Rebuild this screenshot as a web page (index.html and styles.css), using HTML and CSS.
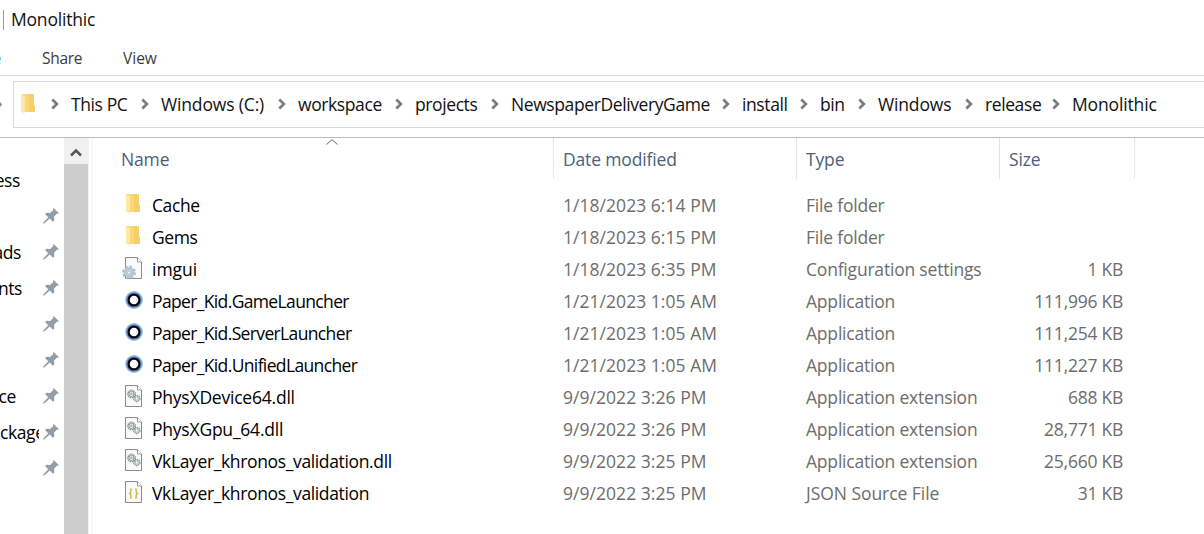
FILE: index.html
```html
<!DOCTYPE html>
<html lang="en">
<head>
<meta charset="utf-8">
<title>Monolithic</title>
<link rel="stylesheet" href="styles.css">
</head>
<body>
<svg class="defs" aria-hidden="true">
  <symbol id="folder" viewBox="0 0 16 22"><path d="M1 1h13v11l1 1v6H1z" fill="#f8d878"/><path d="M9 1h5v11l1 1v6H9z" fill="#f3cd63" opacity=".7"/><path d="M1 1l4 2.500v13l-.5.500v4L1 18z" fill="#ffe9a6"/></symbol>
  <symbol id="page" viewBox="0 0 18 23"><path d="M.5 .5h12l4 4.500v16.500H.5z" fill="#f9f9f9" stroke="#8c8c8c"/><path d="M12.500 .5v4.500h4" fill="#fff" stroke="#999"/></symbol>
  <symbol id="cogs" viewBox="0 0 18 23"><use href="#page" width="18" height="23"/><g fill="none" stroke="#7b8b95"><circle cx="6.500" cy="9" r="3.700" stroke-width="1.500" stroke-dasharray="1.300 .8"/><circle cx="6.500" cy="9" r="2.500" stroke-width=".9"/><circle cx="6.500" cy="9" r=".8" stroke-width=".8"/><circle cx="11.800" cy="13.500" r="3" stroke-width="1.500" stroke-dasharray="1.200 .8"/><circle cx="11.800" cy="13.500" r="1.700" stroke-width=".7"/></g></symbol>
  <symbol id="json" viewBox="0 0 18 23"><use href="#page" width="18" height="23"/><path d="M7 8H5.800v3.500l-1.300 1 1.300 1V17H7M10 8h1.200v3.500l1.300 1-1.300 1V17H10" fill="none" stroke="#bdb82c" stroke-width="1.200"/></symbol>
  <symbol id="config" viewBox="0 0 21 24"><svg x="3" y="0" width="18" height="23"><use href="#page" width="18" height="23"/></svg><circle cx="7" cy="15.500" r="5.900" fill="none" stroke="#a9bdcc" stroke-width="2" stroke-dasharray="2.600 2"/><circle cx="7" cy="15.500" r="3.900" fill="#eef3f6" stroke="#b3c6d3" stroke-width="3"/><circle cx="7" cy="15.500" r="1.600" fill="#fff" stroke="#8399a9" stroke-width=".7"/></symbol>
  <symbol id="app" viewBox="0 0 18 18"><circle cx="9" cy="9" r="8.900" fill="#9dbcea"/><circle cx="9" cy="9" r="7.700" fill="#6489c8"/><circle cx="9" cy="9" r="5.400" fill="#fff" stroke="#080808" stroke-width="2.300"/></symbol>
  <symbol id="pin" viewBox="0 0 16 16"><path d="M10.500 0L16 5.200l-1.400.5-.7-.2-2.900 3.200.4 3.500-1.400 1.500-3.300-3.300L1.200 15.500.2 15.600l.1-1 4.900-5.400L2 6l1.500-1.300 3.600.3L10.300 2l-.4-.8z" fill="#929da5"/></symbol>
  <symbol id="sep" viewBox="0 0 8 12"><path d="M1.300 1.500L5.900 6l-4.600 4.500" fill="none" stroke="#7d7d7d" stroke-width="2.700"/></symbol>
</svg>
<header class="title"><span class="title-rule"></span><span class="title-text">Monolithic</span></header>
<nav class="tabs"><span class="active-tab">File</span><span class="share">Share</span><span>View</span></nav>
<div class="address">
  <svg class="nav-arrow" viewBox="0 0 2 5"><path d="M0 0l2 2.500L0 5z" fill="#888"/></svg>
  <div class="path">
    <svg class="path-folder"><use href="#folder"/></svg>
    <svg class="sep first"><use href="#sep"/></svg>
    <div class="crumb c1"><span>This PC</span><svg class="sep"><use href="#sep"/></svg></div>
    <div class="crumb c2"><span class="wide">Windows (C:)</span><svg class="sep"><use href="#sep"/></svg></div>
    <div class="crumb c3"><span>workspace</span><svg class="sep"><use href="#sep"/></svg></div>
    <div class="crumb c4"><span>projects</span><svg class="sep"><use href="#sep"/></svg></div>
    <div class="crumb c5"><span>NewspaperDeliveryGame</span><svg class="sep"><use href="#sep"/></svg></div>
    <div class="crumb c6"><span>install</span><svg class="sep"><use href="#sep"/></svg></div>
    <div class="crumb c7"><span>bin</span><svg class="sep"><use href="#sep"/></svg></div>
    <div class="crumb c8"><span class="wide">Windows</span><svg class="sep"><use href="#sep"/></svg></div>
    <div class="crumb c9"><span>release</span><svg class="sep"><use href="#sep"/></svg></div>
    <div class="crumb"><span class="wide">Monolithic</span></div>
  </div>
</div>
<main class="main">
  <aside class="sidebar">
    <div class="place"><span class="label l-ess">ess</span></div>
    <div class="place"><span></span><svg><use href="#pin"/></svg></div>
    <div class="place"><span class="label l-ads">ads</span><svg><use href="#pin"/></svg></div>
    <div class="place"><span class="label l-nts">nts</span><svg><use href="#pin"/></svg></div>
    <div class="place"><span></span><svg><use href="#pin"/></svg></div>
    <div class="place"><span></span><svg><use href="#pin"/></svg></div>
    <div class="place"><span class="label l-ce">ce</span><svg><use href="#pin"/></svg></div>
    <div class="place"><span class="cut">ckages</span><svg><use href="#pin"/></svg></div>
    <div class="place"><span></span><svg><use href="#pin"/></svg></div>
  </aside>
  <div class="scroll"><div class="scroll-up"><svg viewBox="0 0 12 9"><path d="M1 7.500l5-5 5 5" fill="none" stroke="#555" stroke-width="2.500"/></svg></div><div class="thumb"></div></div>
  <section class="files">
    <div class="head">
      <div class="h-name">Name<svg class="sort" viewBox="0 0 12 6"><path d="M.5 5.500L6 .7l5.500 4.800" fill="none" stroke="#666"/></svg></div><div>Date modified</div><div>Type</div><div>Size</div>
    </div>
    <div class="row"><svg class="i-folder"><use href="#folder"/></svg><span class="name">Cache</span><span class="date">1/18/2023 6:14 PM</span><span class="type">File folder</span><span></span></div>
    <div class="row"><svg class="i-folder"><use href="#folder"/></svg><span class="name">Gems</span><span class="date">1/18/2023 6:15 PM</span><span class="type">File folder</span><span></span></div>
    <div class="row"><svg class="i-config"><use href="#config"/></svg><span class="name imgui">imgui</span><span class="date">1/18/2023 6:35 PM</span><span class="type">Configuration settings</span><span class="size">1 KB</span></div>
    <div class="row"><svg class="i-app"><use href="#app"/></svg><span class="name launcher">Paper_Kid.GameLauncher</span><span class="date">1/21/2023 1:05 AM</span><span class="type">Application</span><span class="size">111,996 KB</span></div>
    <div class="row"><svg class="i-app"><use href="#app"/></svg><span class="name launcher">Paper_Kid.ServerLauncher</span><span class="date">1/21/2023 1:05 AM</span><span class="type">Application</span><span class="size">111,254 KB</span></div>
    <div class="row"><svg class="i-app"><use href="#app"/></svg><span class="name launcher">Paper_Kid.UnifiedLauncher</span><span class="date">1/21/2023 1:05 AM</span><span class="type">Application</span><span class="size">111,227 KB</span></div>
    <div class="row"><svg class="i-page"><use href="#cogs"/></svg><span class="name physx">PhysXDevice64.dll</span><span class="date">9/9/2022 3:26 PM</span><span class="type">Application extension</span><span class="size">688 KB</span></div>
    <div class="row"><svg class="i-page"><use href="#cogs"/></svg><span class="name physx">PhysXGpu_64.dll</span><span class="date">9/9/2022 3:26 PM</span><span class="type">Application extension</span><span class="size">28,771 KB</span></div>
    <div class="row"><svg class="i-page"><use href="#cogs"/></svg><span class="name layer">VkLayer_khronos_validation.dll</span><span class="date">9/9/2022 3:25 PM</span><span class="type">Application extension</span><span class="size">25,660 KB</span></div>
    <div class="row"><svg class="i-page"><use href="#json"/></svg><span class="name layer">VkLayer_khronos_validation</span><span class="date">9/9/2022 3:25 PM</span><span class="type json">JSON Source File</span><span class="size">31 KB</span></div>
  </section>
</main>
</body>
</html>
```
FILE: styles.css
```css
* { box-sizing: border-box; }
body { margin: 0; width: 1204px; height: 534px; overflow: hidden; background: #fff; color: #111; font: 17.5px/24px "Open Sans", "Noto Sans", sans-serif; letter-spacing: -.4px; white-space: nowrap; }
svg { display: block; flex: none; }
.defs { position: absolute; width: 0; height: 0; }
.title { display: flex; align-items: center; height: 40px; padding-left: 3px; }
.title-rule { width: 1px; height: 20px; background: #999; margin-right: 7px; }
.title-text { margin-top: -2px; letter-spacing: -.2px; }
.tabs { display: flex; align-items: center; height: 36px; border-bottom: 1px solid #dadbdc; font-size: 15.5px; color: #3b3b3b; letter-spacing: -.3px; }
.active-tab { width: 1px; margin-right: 41px; display: flex; justify-content: flex-end; overflow: hidden; color: #1979ca; }
.share { width: 81px; }
.tabs span:last-child { letter-spacing: 0; }
.address { display: flex; align-items: center; height: 62px; border-bottom: 1px solid #bbb; padding: 5px 0 10px; }
.nav-arrow { width: 2px; height: 5px; margin-right: 11px; }
.path { flex: 1; display: flex; align-items: center; height: 47px; border: 1px solid #d9d9d9; border-right: 0; padding-left: 6px; }
.path-folder { width: 16px; height: 22px; }
.sep { width: 8px; height: 12px; margin-right: 12px; }
.first { margin-left: 15px; }
.crumb { display: flex; align-items: center; justify-content: space-between; }
.wide { letter-spacing: -.15px; }
.c1 { width: 90px; } .c2 { width: 137px; } .c3 { width: 117px; } .c4 { width: 96px; } .c5 { width: 231px; }
.c6 { width: 78px; } .c7 { width: 58px; } .c8 { width: 107px; } .c9 { width: 87px; }
.main { display: flex; height: 396px; }
.sidebar { width: 64px; padding-top: 24px; }
.place { display: flex; align-items: center; justify-content: space-between; height: 36px; padding-right: 5px; color: #000; }
.place svg { width: 16px; height: 16px; margin-top: -1px; }
.label { display: flex; justify-content: flex-end; }
.l-ess { width: 20px; } .l-ads { width: 21px; } .l-nts { width: 22px; } .l-ce { width: 16px; }
.cut { width: 39px; overflow: hidden; }
.scroll { width: 25px; background: #f0f0f0; border-right: 1px solid #f0f0f0; }
.scroll-up { height: 26px; display: flex; align-items: center; justify-content: center; padding-top: 3px; }
.scroll-up svg { width: 12px; height: 9px; }
.thumb { height: 370px; background: #cdcdcd; }
.files { flex: 1; margin-left: 2px; border-left: 2px solid #f7f7f7; }
.head { display: grid; grid-template-columns: 461px 243px 203px 135px; height: 41px; margin-bottom: 11px; color: #4c607a; letter-spacing: -.15px; }
.head div { border-right: 1px solid #e5e5e5; padding: 9px 0 0 9px; }
.head .h-name { position: relative; padding-left: 28px; }
.sort { position: absolute; left: 233px; top: 1px; width: 12px; height: 6px; }
.row { display: grid; grid-template-columns: 59px 411px 243px 160px 157px; align-items: center; height: 32px; padding-bottom: 2px; color: #6d6d6d; }
.row .name { color: #000; }
.row .imgui { letter-spacing: 0; }
.row .launcher { letter-spacing: -.64px; }
.row .physx { letter-spacing: -.22px; }
.row .layer { letter-spacing: -.36px; }
.date { letter-spacing: .04px; }
.type { letter-spacing: -.2px; }
.row .json { letter-spacing: -.05px; }
.size { text-align: right; letter-spacing: -.25px; }
.i-folder { width: 16px; height: 22px; margin: -2px 0 0 32px; }
.i-config { width: 21px; height: 24px; margin-left: 29px; }
.i-app { width: 18px; height: 18px; margin: -2px 0 0 32px; }
.i-page { width: 18px; height: 23px; margin: -1px 0 0 32px; }
```
